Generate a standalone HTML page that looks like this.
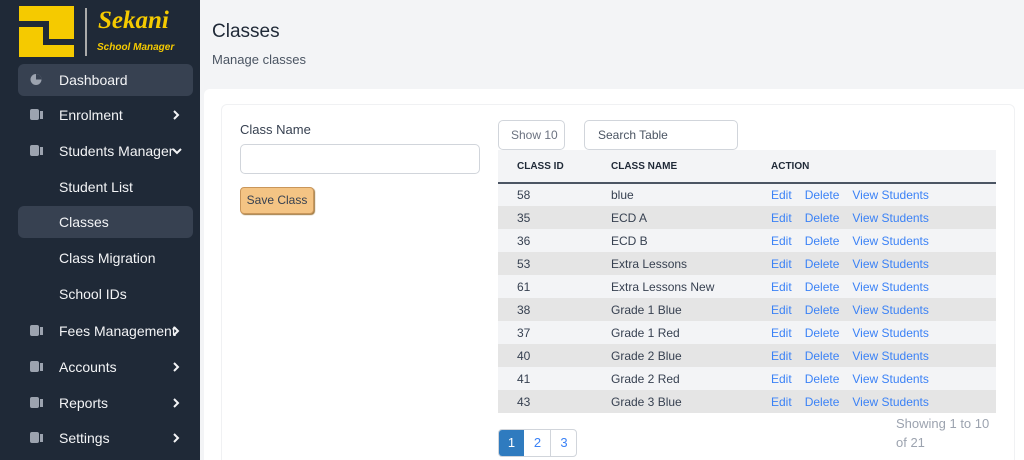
<!DOCTYPE html>
<html><head><style>
*{margin:0;padding:0;box-sizing:border-box}
html,body{width:1024px;height:460px;overflow:hidden}
body{font-family:"Liberation Sans",sans-serif;background:#f3f4f6;position:relative}
.sb{position:absolute;left:0;top:0;width:200px;height:460px;background:#1f2937}
.it{position:absolute;left:18px;width:175px;height:32px;color:#f3f4f6;font-size:14px;line-height:32px;padding-left:41px}
.it.act{background:#374151;border-radius:6px}
.ic{position:absolute;left:12px;top:10px;width:12px;height:11px}
.ch{position:absolute;right:12px;top:11px;width:10px;height:10px}
.a{position:absolute}
table{border-collapse:collapse;width:498px;font-size:12px}
td{height:23px;color:#374151;padding:0}
th{height:33px;font-size:10px;font-weight:bold;color:#1f2937;text-align:left;background:#f3f4f6;border-bottom:2px solid #4b5563}
tr:nth-child(even) td{background:#f3f4f6}
tr:nth-child(odd) td{background:#e5e5e5}
.l{color:#3b82f6;margin-right:13px}
</style></head><body>
<div class="sb">
<div class="a" style="left:19px;top:6px;width:55px;height:51px;background:#f5ca00"></div>
<div class="a" style="left:19px;top:21px;width:24px;height:6px;background:#1f2937"></div>
<div class="a" style="left:43px;top:21px;width:6px;height:24px;background:#1f2937"></div>
<div class="a" style="left:49px;top:39px;width:25px;height:6px;background:#1f2937"></div>
<div class="a" style="left:85px;top:8px;width:2px;height:48px;background:#aaa"></div>
<div class="a" style="left:98px;top:7px;color:#f5ca00;font:italic bold 25px 'Liberation Serif',serif">Sekani</div>
<div class="a" style="left:97px;top:42px;color:#f5ca00;font:italic bold 10px 'Liberation Sans',sans-serif">School Manager</div>
<div class="it act" style="top:64px"><svg class="ic" viewBox="0 0 12 12"><circle cx="6" cy="6" r="6" fill="#9ca3af"/><path d="M6 0V6H12A6 6 0 0 0 6 0" fill="#374151"/></svg>Dashboard</div>
<div class="it" style="top:99px"><div class="ic" style="background:#9ca3af;border-radius:2px;width:9px"></div><div class="ic" style="left:22px;width:3px;background:#9ca3af;top:12px;height:8px"></div>Enrolment<svg class="ch" viewBox="0 0 10 10"><path d="M3 1L7 5L3 9" stroke="#f3f4f6" stroke-width="2" fill="none"/></svg></div>
<div class="it" style="top:135px"><div class="ic" style="background:#9ca3af;border-radius:2px;width:9px"></div><div class="ic" style="left:22px;width:3px;background:#9ca3af;top:12px;height:8px"></div>Students Manager<svg class="ch" style="right:11px" viewBox="0 0 10 10"><path d="M1 3L5 7L9 3" stroke="#f3f4f6" stroke-width="2" fill="none"/></svg></div>
<div class="it" style="top:171px">Student List</div>
<div class="it act" style="top:206px">Classes</div>
<div class="it" style="top:242px">Class Migration</div>
<div class="it" style="top:278px">School IDs</div>
<div class="it" style="top:315px"><div class="ic" style="background:#9ca3af;border-radius:2px;width:9px"></div><div class="ic" style="left:22px;width:3px;background:#9ca3af;top:12px;height:8px"></div>Fees Management<svg class="ch" style="right:12px" viewBox="0 0 10 10"><path d="M3 1L7 5L3 9" stroke="#f3f4f6" stroke-width="2" fill="none"/></svg></div>
<div class="it" style="top:351px"><div class="ic" style="background:#9ca3af;border-radius:2px;width:9px"></div><div class="ic" style="left:22px;width:3px;background:#9ca3af;top:12px;height:8px"></div>Accounts<svg class="ch" viewBox="0 0 10 10"><path d="M3 1L7 5L3 9" stroke="#f3f4f6" stroke-width="2" fill="none"/></svg></div>
<div class="it" style="top:387px"><div class="ic" style="background:#9ca3af;border-radius:2px;width:9px"></div><div class="ic" style="left:22px;width:3px;background:#9ca3af;top:12px;height:8px"></div>Reports<svg class="ch" viewBox="0 0 10 10"><path d="M3 1L7 5L3 9" stroke="#f3f4f6" stroke-width="2" fill="none"/></svg></div>
<div class="it" style="top:422px"><div class="ic" style="background:#9ca3af;border-radius:2px;width:9px"></div><div class="ic" style="left:22px;width:3px;background:#9ca3af;top:12px;height:8px"></div>Settings<svg class="ch" viewBox="0 0 10 10"><path d="M3 1L7 5L3 9" stroke="#f3f4f6" stroke-width="2" fill="none"/></svg></div>
</div>
<div class="a" style="left:212px;top:21px;font-size:19px;color:#1f2937">Classes</div>
<div class="a" style="left:212px;top:52px;font-size:13px;color:#4b5563">Manage classes</div>
<div class="a" style="left:204px;top:89px;width:830px;height:380px;background:#fff;border-radius:6px"></div>
<div class="a" style="left:221px;top:104px;width:794px;height:370px;background:#fff;border:1px solid #f0f1f3;border-radius:6px"></div>
<div class="a" style="left:240px;top:122px;font-size:13px;color:#374151">Class Name</div>
<div class="a" style="left:240px;top:144px;width:240px;height:30px;border:1px solid #d1d5db;border-radius:5px"></div>
<div class="a" style="left:240px;top:187px;width:74px;height:27px;background:#f4c484;border:1px solid #c9965a;border-radius:4px;box-shadow:1px 1px 1px #a07a40;font-size:12px;line-height:25px;text-align:center;color:#374151">Save Class</div>
<div class="a" style="left:498px;top:120px;width:67px;height:30px;border:1px solid #d1d5db;border-radius:5px;font-size:12px;line-height:28px;padding-left:12px;color:#6b7280">Show 10</div>
<div class="a" style="left:584px;top:120px;width:154px;height:30px;border:1px solid #d1d5db;border-radius:5px;font-size:12px;line-height:28px;padding-left:13px;color:#4b5563">Search Table</div>
<table class="a" style="left:498px;top:150px">
<tr><th style="padding-left:19px;width:113px">CLASS ID</th><th style="width:160px">CLASS NAME</th><th>ACTION</th></tr>
<tr><td style="padding-left:19px">58</td><td>blue</td><td><span class="l">Edit</span><span class="l">Delete</span><span class="l">View Students</span></td></tr>
<tr><td style="padding-left:19px">35</td><td>ECD A</td><td><span class="l">Edit</span><span class="l">Delete</span><span class="l">View Students</span></td></tr>
<tr><td style="padding-left:19px">36</td><td>ECD B</td><td><span class="l">Edit</span><span class="l">Delete</span><span class="l">View Students</span></td></tr>
<tr><td style="padding-left:19px">53</td><td>Extra Lessons</td><td><span class="l">Edit</span><span class="l">Delete</span><span class="l">View Students</span></td></tr>
<tr><td style="padding-left:19px">61</td><td>Extra Lessons New</td><td><span class="l">Edit</span><span class="l">Delete</span><span class="l">View Students</span></td></tr>
<tr><td style="padding-left:19px">38</td><td>Grade 1 Blue</td><td><span class="l">Edit</span><span class="l">Delete</span><span class="l">View Students</span></td></tr>
<tr><td style="padding-left:19px">37</td><td>Grade 1 Red</td><td><span class="l">Edit</span><span class="l">Delete</span><span class="l">View Students</span></td></tr>
<tr><td style="padding-left:19px">40</td><td>Grade 2 Blue</td><td><span class="l">Edit</span><span class="l">Delete</span><span class="l">View Students</span></td></tr>
<tr><td style="padding-left:19px">41</td><td>Grade 2 Red</td><td><span class="l">Edit</span><span class="l">Delete</span><span class="l">View Students</span></td></tr>
<tr><td style="padding-left:19px">43</td><td>Grade 3 Blue</td><td><span class="l">Edit</span><span class="l">Delete</span><span class="l">View Students</span></td></tr>
</table>
<div class="a" style="left:498px;top:429px;width:79px;height:28px;border:1px solid #d1d5db;border-radius:4px;overflow:hidden;font-size:13px;line-height:26px;color:#3b82f6">
<span class="a" style="left:0;width:25px;height:28px;background:#2f7bbf;color:#fff;text-align:center">1</span>
<span class="a" style="left:26px;width:26px;text-align:center;border-right:1px solid #d1d5db">2</span>
<span class="a" style="left:52px;width:26px;text-align:center">3</span></div>
<div class="a" style="left:896px;top:414px;font-size:13px;line-height:19px;color:#9ca3af;width:100px">Showing 1 to 10 of 21</div>
</body></html>
